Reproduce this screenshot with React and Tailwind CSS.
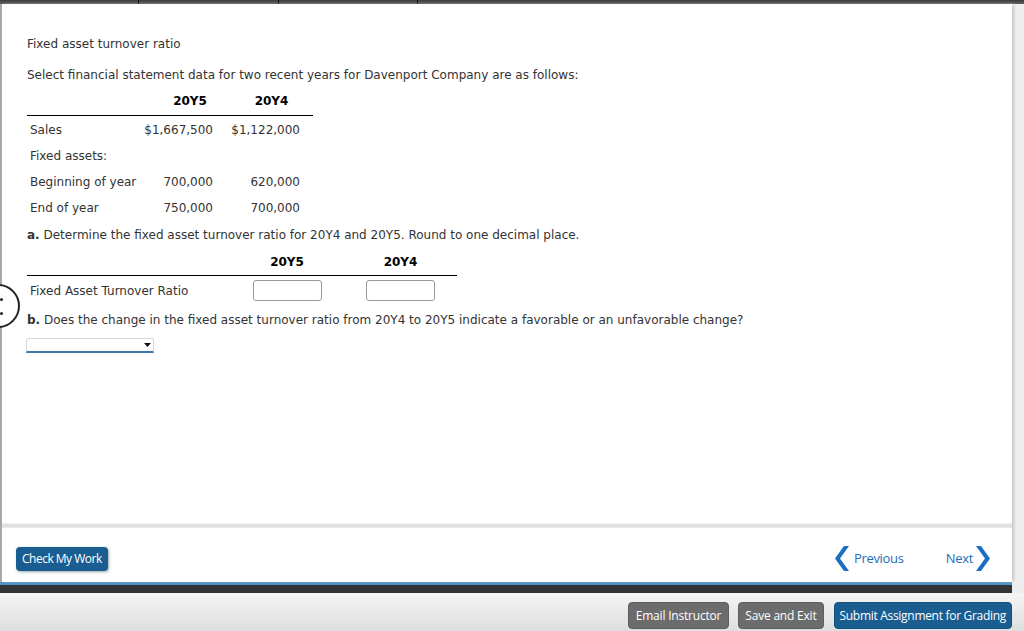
export default function App() {
  const body = { fontFamily: '"DejaVu Sans", Verdana, sans-serif' };
  const ui = { fontFamily: '"Open Sans", "Liberation Sans", sans-serif' };

  return (
    <div className="w-[1024px] h-[631px] overflow-hidden bg-[#ededed] flex flex-col relative">
      {/* top tab strip */}
      <div className="h-[4px] flex bg-gradient-to-b from-[#3a3a3a] to-[#626262]">
        <div className="w-[139px] border-r border-[#111]" />
        <div className="w-[140px] border-r border-[#111]" />
        <div className="w-[139px] border-r border-[#111]" />
        <div className="flex-1" />
      </div>

      <div className="flex">
        <div className="w-[1012px] flex flex-col border-l-2 border-[#a8a8a8] bg-white shadow-[3px_0_3px_-1px_#c4c4c4] relative">
          {/* question content */}
          <div className="h-[519px] pl-[25px] pt-[32px] text-[12px] text-[#333] leading-[16px]" style={body}>
            <p>Fixed asset turnover ratio</p>
            <p className="mt-[15px]">
              Select financial statement data for two recent years for Davenport Company are as follows:
            </p>

            <div className="mt-[8px] w-[286px]">
              <div className="flex h-[25px] pt-[2px] border-b border-black font-bold text-black">
                <div className="w-[123px]" />
                <div className="w-[80px] text-center">20Y5</div>
                <div className="w-[83px] text-center">20Y4</div>
              </div>
              {[
                ["Sales", "$1,667,500", "$1,122,000"],
                ["Fixed assets:", "", ""],
                ["Beginning of year", "700,000", "620,000"],
                ["End of year", "750,000", "700,000"],
              ].map(([label, a, b]) => (
                <div key={label} className="flex h-[26px] items-center pt-[1px]">
                  <div className="w-[110px] pl-[3px] whitespace-nowrap">{label}</div>
                  <div className="w-[76px] text-right">{a}</div>
                  <div className="w-[87px] text-right">{b}</div>
                </div>
              ))}
            </div>

            <p className="mt-[7px]">
              <span className="font-bold">a.</span> Determine the fixed asset turnover ratio for 20Y4 and 20Y5. Round to one decimal place.
            </p>

            <div className="mt-[7px] w-[430px]">
              <div className="flex h-[26px] pt-[4px] border-b border-black font-bold text-black">
                <div className="w-[203px]" />
                <div className="w-[114px] text-center">20Y5</div>
                <div className="w-[113px] text-center">20Y4</div>
              </div>
              <div className="flex h-[27px] items-center pt-[1px]">
                <div className="w-[203px] pl-[3px] pt-[1px]">Fixed Asset Turnover Ratio</div>
                <div className="w-[114px] flex justify-center">
                  <div className="w-[69px] h-[21px] border border-[#9a9a9a] rounded-[3px] bg-white" />
                </div>
                <div className="w-[113px] flex justify-center">
                  <div className="w-[69px] h-[21px] border border-[#9a9a9a] rounded-[3px] bg-white" />
                </div>
              </div>
            </div>

            <p className="mt-[9px]">
              <span className="font-bold">b.</span> Does the change in the fixed asset turnover ratio from 20Y4 to 20Y5 indicate a favorable or an unfavorable change?
            </p>

            <div className="mt-[10px] ml-[-1px] w-[128px] h-[15px] border border-[#d6d6d6] border-b-2 border-b-[#3b78ad] rounded-t-[3px] flex items-center justify-end pr-[2px]">
              <svg width="7" height="4" viewBox="0 0 7 4">
                <path d="M0 0 L7 0 L3.5 4 Z" fill="#111" />
              </svg>
            </div>
          </div>

          {/* separator */}
          <div className="h-[5px] bg-gradient-to-b from-[#f4f4f4] via-[#dcdcdc] to-[#ececec]" />

          {/* footer nav */}
          <div className="h-[54px] flex items-start justify-between pl-[14px] pr-[21px] pt-[19px]" style={ui}>
            <button className="h-[24px] px-[6px] rounded-[4px] bg-[#1a5e91] text-white text-[12px] tracking-[-0.5px] shadow-[1px_1px_3px_#9aa]">
              Check My Work
            </button>
            <div className="flex items-center text-[#1b6cbc] text-[13px] tracking-[-0.3px] mt-[-1px]">
              <svg width="15" height="25" viewBox="0 0 15 25">
                <path d="M10 0 L15 0 L6 12.5 L15 25 L10 25 L1 12.5 Z" fill="#1b6ec2" strokeLinejoin="round" />
              </svg>
              <span className="ml-[5px]">Previous</span>
              <span className="ml-[42px]">Next</span>
              <svg width="15" height="25" viewBox="0 0 15 25" className="ml-[3px]">
                <path d="M5 0 L0 0 L9 12.5 L0 25 L5 25 L14 12.5 Z" fill="#1b6ec2" strokeLinejoin="round" />
              </svg>
            </div>
          </div>

          {/* circle tab on left edge */}
          <div className="absolute left-[-26px] top-[280px] w-[44px] h-[44px] rounded-full border-2 border-[#222] bg-white flex flex-col items-end justify-center gap-[11px] pr-[15px]">
            <div className="w-[3px] h-[3px] rounded-full bg-[#222]" />
            <div className="w-[3px] h-[3px] rounded-full bg-[#222]" />
          </div>
        </div>
        <div className="flex-1 bg-[#efefef]" />
      </div>

      <div className="w-[1012px] h-[3px] bg-[#4d92c8]" />
      <div className="w-[1012px] h-[8px] bg-[#333333]" />

      {/* bottom action bar */}
      <div className="flex-1 bg-gradient-to-b from-[#f5f5f5] to-[#dedede] flex justify-end items-start pt-[9px] pr-[12px]" style={ui}>
        <button className="h-[27px] px-[7px] rounded-[4px] bg-[#6c6c6c] border border-[#5e5e5e] text-white text-[12px] tracking-[-0.2px]">
          Email Instructor
        </button>
        <button className="ml-[9px] h-[27px] px-[6px] rounded-[4px] bg-[#6c6c6c] border border-[#5e5e5e] text-white text-[12px] tracking-[-0.2px]">
          Save and Exit
        </button>
        <button className="ml-[10px] h-[27px] px-[5px] rounded-[4px] bg-[#1a5e91] border border-[#16507c] text-white text-[12px] tracking-[-0.3px]">
          Submit Assignment for Grading
        </button>
      </div>
    </div>
  );
}
